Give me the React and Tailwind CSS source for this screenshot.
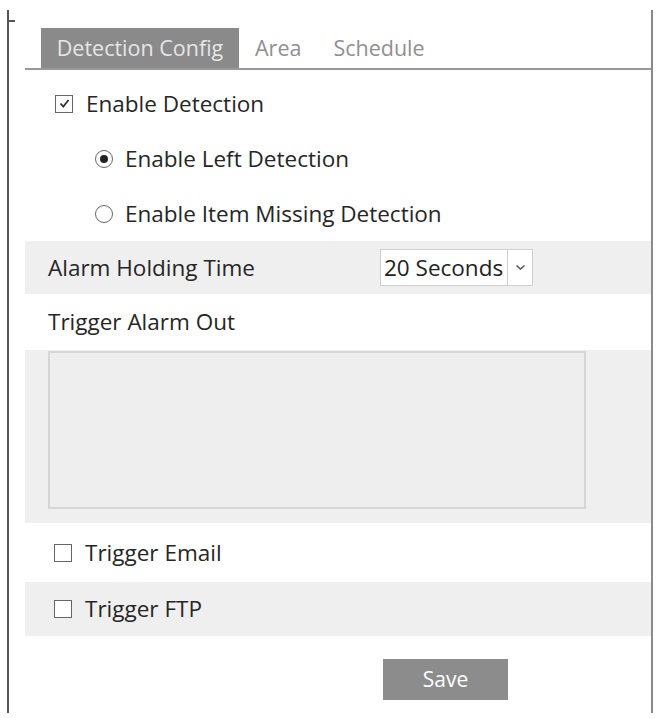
import React from "react";

const font = { fontFamily: '"Open Sans", "Noto Sans", sans-serif' };

const CheckBox = ({ checked }) => (
  <span className="flex h-[18px] w-[18px] shrink-0 items-center justify-center border-[1.5px] border-[#666] bg-white">
    {checked && (
      <svg width="13" height="13" viewBox="0 0 13 13">
        <path d="M2.5 6.5 L5.3 9.5 L10.5 3" fill="none" stroke="#333" strokeWidth="1.8" />
      </svg>
    )}
  </span>
);

const Radio = ({ checked }) => (
  <span className="flex h-[18px] w-[18px] shrink-0 items-center justify-center rounded-full border-[1.5px] border-[#666] bg-white">
    {checked && <span className="h-[8px] w-[8px] rounded-full bg-[#222]" />}
  </span>
);

const App = () => {
  return (
    <div className="relative h-[718px] w-[656px] bg-white text-[22.5px] text-[#262626]" style={font}>
      <div className="absolute left-[7px] top-[10px] h-[2px] w-[8px] bg-[#555]" />
      <div className="absolute left-[7px] top-[711px] h-[2px] w-[7px] bg-[#555]" />
      <div className="ml-[7px] mt-[10px] h-[703px] w-[646px] border-l-2 border-r-2 border-l-[#555] border-r-[#8a8a8a] pt-[18px]">
        {/* tabs */}
        <div className="ml-[16px] flex border-b-2 border-[#999] pl-[16px] text-[21.5px]">
          <div className="flex h-[40px] w-[198px] items-center justify-center bg-[#8a8a8a] text-[#e6e6e6]">
            Detection Config
          </div>
          <div className="flex h-[40px] items-center px-4 text-[#8f8f8f]">Area</div>
          <div className="flex h-[40px] items-center px-4 text-[#8f8f8f]">Schedule</div>
        </div>

        <div className="ml-[16px] mt-[6px] flex flex-col">
          <div className="flex h-[55px] items-center gap-[13px] pl-[30px]">
            <CheckBox checked />
            <span>Enable Detection</span>
          </div>
          <div className="flex h-[55px] items-center gap-[12px] pl-[70px]">
            <Radio checked />
            <span>Enable Left Detection</span>
          </div>
          <div className="flex h-[55px] items-center gap-[12px] pl-[70px]">
            <Radio />
            <span>Enable Item Missing Detection</span>
          </div>

          <div className="flex h-[53px] items-center bg-[#efefef] pl-[23px]">
            <span className="w-[332px]">Alarm Holding Time</span>
            <div className="flex h-[37px] w-[153px] items-stretch border border-[#cfcfcf] bg-white">
              <span className="flex w-[126px] items-center pl-[3px] text-[#222]">20 Seconds</span>
              <span className="flex flex-1 items-center justify-center border-l border-[#cfcfcf]">
                <svg width="11" height="7" viewBox="0 0 11 7">
                  <path d="M1.5 1.5 L5.5 5 L9.5 1.5" fill="none" stroke="#555" strokeWidth="1.6" />
                </svg>
              </span>
            </div>
          </div>

          <div className="flex h-[56px] items-center pl-[23px]">Trigger Alarm Out</div>

          <div className="h-[173px] bg-[#efefef] pl-[23px] pt-[1px]">
            <div className="h-[158px] w-[538px] border-2 border-[#d6d6d6] bg-[#eeeeee]" />
          </div>

          <div className="flex h-[59px] items-center gap-[13px] pl-[29px]">
            <CheckBox />
            <span>Trigger Email</span>
          </div>
          <div className="flex h-[54px] items-center gap-[13px] bg-[#efefef] pl-[29px]">
            <CheckBox />
            <span>Trigger FTP</span>
          </div>

          <div className="mt-[23px] pl-[358px]">
            <button className="flex h-[41px] w-[125px] items-center justify-center bg-[#8c8c8c] text-[21px] text-white">
              Save
            </button>
          </div>
        </div>
      </div>
    </div>
  );
};

export default App;
